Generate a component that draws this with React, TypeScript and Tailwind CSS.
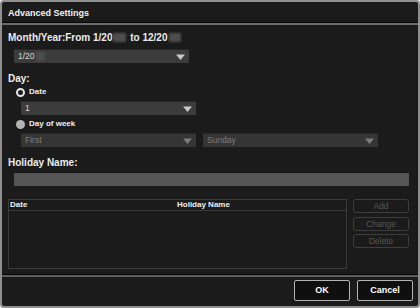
import React from "react";

const font = { fontFamily: '"Liberation Sans", Arial, sans-serif' };

// blurred-out year digits
function Blur({ w = 12 }: { w?: number }) {
  return (
    <span
      className="inline-block h-[9px] bg-[#4d4d4d] blur-[1px] align-middle mx-[1px]"
      style={{ width: w }}
    />
  );
}

function Arrow({ dim }: { dim?: boolean }) {
  return (
    <svg width="9" height="6" viewBox="0 0 9 6" className="shrink-0">
      <path d="M0 0.5 H9 L4.5 6 Z" fill={dim ? "#7c7c7c" : "#c9c9c9"} />
    </svg>
  );
}

function Select({
  children,
  width,
  dim,
}: {
  children: React.ReactNode;
  width: string;
  dim?: boolean;
}) {
  return (
    <div
      className={`${width} h-[14px] flex items-center justify-between pl-[4px] pr-[4px] border-t border-[#262626] ${
        dim ? "bg-[#353535] text-[#7d7d7d]" : "bg-[#3c3c3c] text-[#d6d6d6]"
      } text-[8.5px]`}
    >
      <span className="flex items-center">{children}</span>
      <Arrow dim={dim} />
    </div>
  );
}

function Radio({ checked, label }: { checked?: boolean; label: string }) {
  return (
    <div className="h-[12px] flex items-center pl-[8px] gap-[4px]">
      {checked ? (
        <span className="w-[9px] h-[9px] rounded-full border-[2px] border-[#e8e8e8] bg-[#1b1b1b]" />
      ) : (
        <span className="w-[9px] h-[9px] rounded-full bg-[#b4b4b4]" />
      )}
      <span className="text-[8px] font-bold text-[#f0f0f0]">{label}</span>
    </div>
  );
}

function SideButton({ label }: { label: string }) {
  return (
    <div className="w-[56px] h-[14px] rounded-[3px] border border-[#3e3e3e] flex items-center justify-center text-[8.5px] text-[#575757]">
      {label}
    </div>
  );
}

export default function App() {
  return (
    <div className="w-[420px] h-[308px] bg-[#f2f2f2]" style={font}>
      <div className="w-full h-full rounded-[4px] border-2 border-[#8f8f8f] bg-[#1b1b1b] flex flex-col overflow-hidden">
        {/* Title */}
        <div className="h-[20px] flex items-center pl-[6px] pt-[3px]">
          <span className="text-[9px] font-bold text-[#f2f2f2]">Advanced Settings</span>
        </div>
        <div className="h-px bg-[#050505]" />
        <div className="h-[2px] bg-[#6c6c6c]" />

        {/* Body */}
        <div className="px-[6px] flex-1">
          <div className="h-[24px] flex items-center text-[10px] font-bold text-[#ececec]">
            Month/Year:From 1/20
            <Blur w={13} />
            &nbsp;to 12/20
            <Blur w={12} />
          </div>
          <div className="ml-[6px]">
            <Select width="w-[175px]">
              1/20
              <Blur w={9} />
            </Select>
          </div>

          <div className="mt-[9px] h-[12px] flex items-center text-[10px] font-bold text-[#ececec]">
            Day:
          </div>
          <div className="mt-[2px]">
            <Radio checked label="Date" />
          </div>
          <div className="mt-[3px] ml-[13px]">
            <Select width="w-[175px]">1</Select>
          </div>
          <div className="mt-[3px]">
            <Radio label="Day of week" />
          </div>
          <div className="mt-[3px] ml-[13px] flex gap-[7px]">
            <Select width="w-[175px]" dim>
              First
            </Select>
            <Select width="w-[175px]" dim>
              Sunday
            </Select>
          </div>

          <div className="mt-[9px] h-[12px] flex items-center text-[10px] font-bold text-[#ececec]">
            Holiday Name:
          </div>
          <div className="mt-[4px] ml-[6px] w-[395px] h-[14px] bg-[#555555] border-t border-[#151515]" />

          <div className="mt-[13px] flex gap-[6px]">
            <div className="w-[339px] h-[70px] border border-[#3b3b3b] flex flex-col">
              <div className="h-[11px] border-b border-[#3b3b3b] flex items-center text-[8px] font-bold text-[#f0f0f0]">
                <span className="pl-[1px] w-[168px]">Date</span>
                <span>Holiday Name</span>
              </div>
            </div>
            <div className="flex flex-col">
              <SideButton label="Add" />
              <div className="mt-[4px]">
                <SideButton label="Change" />
              </div>
              <div className="mt-[3px]">
                <SideButton label="Delete" />
              </div>
            </div>
          </div>
        </div>

        {/* Footer */}
        <div className="h-px bg-[#050505]" />
        <div className="h-[2px] bg-[#5e5e5e]" />
        <div className="h-[29px] flex justify-end items-start pt-[3px] pr-[5px] gap-[7px]">
          <div className="w-[56px] h-[21px] rounded-[2px] border border-[#b4b4b4] bg-[#0f0f0f] flex items-center justify-center text-[9px] font-bold text-white">
            OK
          </div>
          <div className="w-[56px] h-[21px] rounded-[2px] border border-[#b4b4b4] bg-[#0f0f0f] flex items-center justify-center text-[9px] font-bold text-white">
            Cancel
          </div>
        </div>
      </div>
    </div>
  );
}
